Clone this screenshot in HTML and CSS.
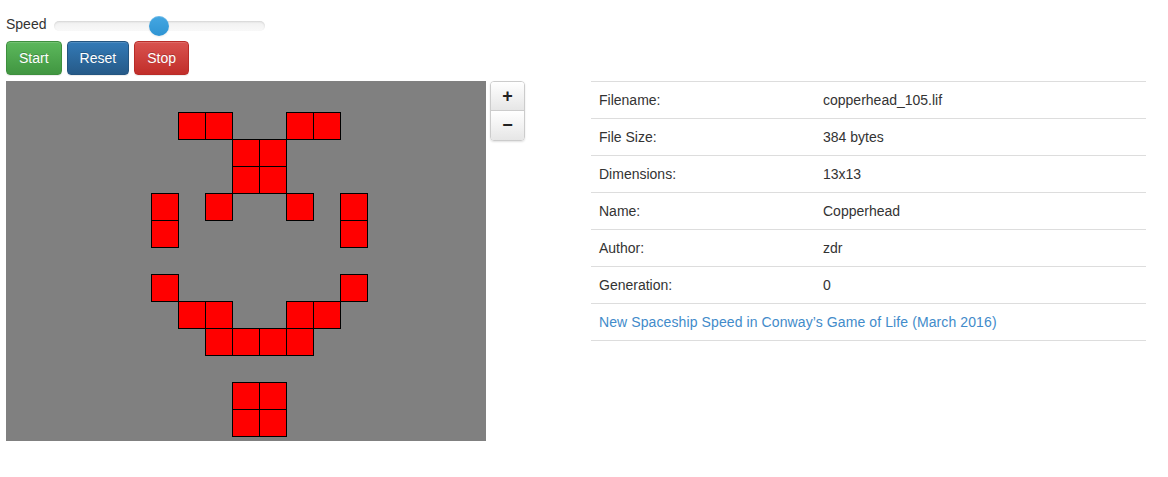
FILE: index.html
```html
<!DOCTYPE html>
<html>
<head>
<meta charset="utf-8">
<title>Life</title>
<link rel="stylesheet" href="styles.css">
</head>
<body>
<div class="page">
  <div class="speed-row">
    <span class="speed-label">Speed</span>
    <div class="slider">
      <div class="slider-track"></div>
      <div class="slider-thumb"></div>
    </div>
  </div>
  <div class="buttons">
    <button class="btn btn-success">Start</button>
    <button class="btn btn-primary">Reset</button>
    <button class="btn btn-danger">Stop</button>
  </div>
  <div class="main">
    <div class="board">
      <svg class="board-svg" width="480" height="360" viewBox="0 0 480 360">
        <rect x="0" y="0" width="480" height="360" fill="#808080"/>
        <g fill="#ff0000" stroke="#000" stroke-width="1">
          <rect x="172.5" y="31.5" width="27" height="27"/>
          <rect x="199.5" y="31.5" width="27" height="27"/>
          <rect x="280.5" y="31.5" width="27" height="27"/>
          <rect x="307.5" y="31.5" width="27" height="27"/>
          <rect x="226.5" y="58.5" width="27" height="27"/>
          <rect x="253.5" y="58.5" width="27" height="27"/>
          <rect x="226.5" y="85.5" width="27" height="27"/>
          <rect x="253.5" y="85.5" width="27" height="27"/>
          <rect x="145.5" y="112.5" width="27" height="27"/>
          <rect x="199.5" y="112.5" width="27" height="27"/>
          <rect x="280.5" y="112.5" width="27" height="27"/>
          <rect x="334.5" y="112.5" width="27" height="27"/>
          <rect x="145.5" y="139.5" width="27" height="27"/>
          <rect x="334.5" y="139.5" width="27" height="27"/>
          <rect x="145.5" y="193.5" width="27" height="27"/>
          <rect x="334.5" y="193.5" width="27" height="27"/>
          <rect x="172.5" y="220.5" width="27" height="27"/>
          <rect x="199.5" y="220.5" width="27" height="27"/>
          <rect x="280.5" y="220.5" width="27" height="27"/>
          <rect x="307.5" y="220.5" width="27" height="27"/>
          <rect x="199.5" y="247.5" width="27" height="27"/>
          <rect x="226.5" y="247.5" width="27" height="27"/>
          <rect x="253.5" y="247.5" width="27" height="27"/>
          <rect x="280.5" y="247.5" width="27" height="27"/>
          <rect x="226.5" y="301.5" width="27" height="27"/>
          <rect x="253.5" y="301.5" width="27" height="27"/>
          <rect x="226.5" y="328.5" width="27" height="27"/>
          <rect x="253.5" y="328.5" width="27" height="27"/>
        </g>
      </svg>
    </div>
    <div class="zoom">
      <button class="zoom-btn zoom-in">+</button>
      <button class="zoom-btn zoom-out">&minus;</button>
    </div>
    <table class="info">
      <tbody>
        <tr><td class="key">Filename:</td><td>copperhead_105.lif</td></tr>
        <tr><td class="key">File Size:</td><td>384 bytes</td></tr>
        <tr><td class="key">Dimensions:</td><td>13x13</td></tr>
        <tr><td class="key">Name:</td><td>Copperhead</td></tr>
        <tr><td class="key">Author:</td><td>zdr</td></tr>
        <tr><td class="key">Generation:</td><td>0</td></tr>
        <tr><td colspan="2"><a class="info-link" href="#">New Spaceship Speed in Conway’s Game of Life (March 2016)</a></td></tr>
      </tbody>
    </table>
  </div>
</div>
</body>
</html>
```
FILE: styles.css
```css
html, body {
  margin: 0;
  padding: 0;
  background: #fff;
}
body {
  font-family: "Liberation Sans", Arial, sans-serif;
  font-size: 14px;
  line-height: 20px;
  color: #333;
}
.page {
  padding: 15px 6px 0 6px;
}
.speed-row {
  display: flex;
  align-items: center;
  height: 21px;
}
.speed-label {
  color: #333;
  padding-bottom: 4px;
}
.slider {
  position: relative;
  width: 211px;
  height: 21px;
  margin-left: 8px;
}
.slider-track {
  position: absolute;
  left: 0;
  right: 0;
  top: 6px;
  height: 10px;
  border-radius: 5px;
  background: linear-gradient(to bottom, #f0f0f0, #f9f9f9);
  box-shadow: inset 0 1px 2px rgba(0, 0, 0, 0.12);
}
.slider-thumb {
  position: absolute;
  left: 95px;
  top: 1px;
  width: 20px;
  height: 20px;
  border-radius: 50%;
  background: linear-gradient(to bottom, #44a7e2, #2f94d3);
  box-shadow: inset 0 1px 0 rgba(255, 255, 255, 0.2), 0 1px 2px rgba(0, 0, 0, 0.08);
}
.buttons {
  display: flex;
  gap: 5px;
  margin-top: 5px;
}
.btn {
  font-family: "Liberation Sans", Arial, sans-serif;
  font-size: 14px;
  line-height: 20px;
  padding: 6px 12px;
  border: 1px solid transparent;
  border-radius: 4px;
  color: #fff;
  text-shadow: 0 -1px 0 rgba(0, 0, 0, 0.2);
  box-shadow: inset 0 1px 0 rgba(255, 255, 255, 0.15), 0 1px 1px rgba(0, 0, 0, 0.075);
  cursor: pointer;
}
.btn-success {
  background: linear-gradient(to bottom, #5cb85c 0, #419641 100%);
  border-color: #3e8f3e;
}
.btn-primary {
  background: linear-gradient(to bottom, #337ab7 0, #265a88 100%);
  border-color: #245580;
}
.btn-danger {
  background: linear-gradient(to bottom, #d9534f 0, #c12e2a 100%);
  border-color: #b92c28;
}
.main {
  display: flex;
  align-items: flex-start;
  margin-top: 6px;
}
.board {
  width: 480px;
  height: 360px;
  flex: none;
}
.board-svg {
  display: block;
}
.zoom {
  display: flex;
  flex-direction: column;
  width: 33px;
  margin-left: 4px;
  border: 1px solid #ccc;
  border-radius: 4px;
  overflow: hidden;
  box-shadow: 0 1px 2px rgba(0, 0, 0, 0.12);
  flex: none;
}
.zoom-btn {
  display: block;
  width: 100%;
  height: 29px;
  padding: 0;
  margin: 0;
  border: 0;
  background: linear-gradient(to bottom, #fff 0, #e6e6e6 100%);
  font-family: "Liberation Sans", Arial, sans-serif;
  font-size: 18px;
  font-weight: bold;
  line-height: 29px;
  color: #222;
  cursor: pointer;
}
.zoom-in {
  border-bottom: 1px solid #ccc;
}
.info {
  margin-left: 66px;
  width: 555px;
  border-collapse: collapse;
  border-spacing: 0;
  border-bottom: 1px solid #ddd;
  flex: none;
}
.info td {
  padding: 8px;
  line-height: 20px;
  border-top: 1px solid #ddd;
  vertical-align: top;
  text-align: left;
}
.info td.key {
  width: 208px;
}
.info-link {
  color: #428bca;
  text-decoration: none;
  letter-spacing: 0.1px;
}
```
